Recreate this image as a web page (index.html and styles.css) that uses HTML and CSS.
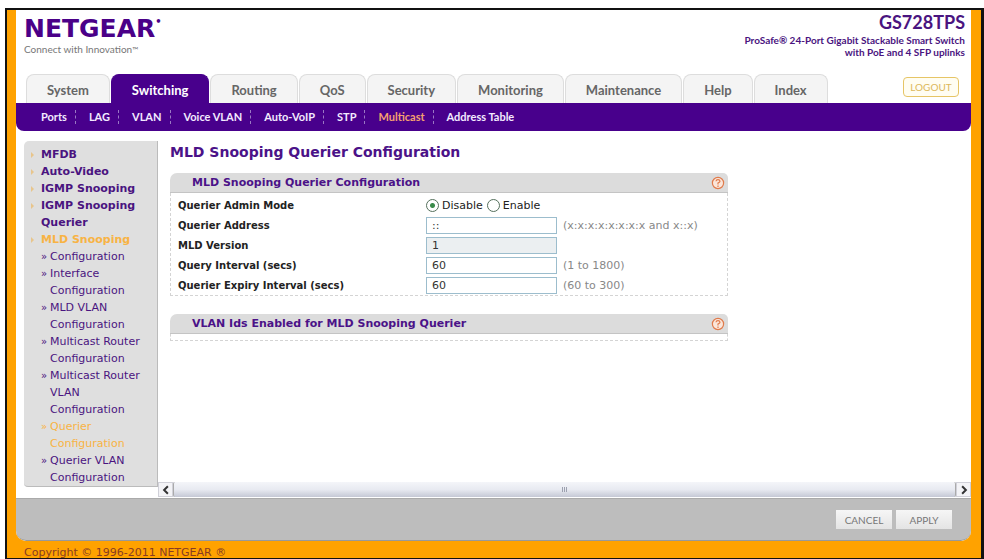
FILE: index.html
```html
<!DOCTYPE html>
<html lang="en">
<head>
<meta charset="utf-8">
<title>NETGEAR GS728TPS</title>
<link rel="stylesheet" href="styles.css">
</head>
<body>
<div class="frame">
  <div class="app">
    <header class="header">
      <div class="brand">
        <div class="wordmark">NETGEAR<span class="dot">•</span></div>
        <div class="tagline">Connect with Innovation<span class="tm">™</span></div>
      </div>
      <div class="model">
        <div class="model-name">GS728TPS</div>
        <div class="model-text">ProSafe® 24-Port Gigabit Stackable Smart Switch<br>with PoE and 4 SFP uplinks</div>
      </div>
    </header>
    <div class="tabbar">
      <nav class="tabs">
        <a class="tab" href="#">System</a>
        <a class="tab active" href="#">Switching</a>
        <a class="tab" href="#">Routing</a>
        <a class="tab" href="#">QoS</a>
        <a class="tab" href="#">Security</a>
        <a class="tab" href="#">Monitoring</a>
        <a class="tab" href="#">Maintenance</a>
        <a class="tab" href="#">Help</a>
        <a class="tab" href="#">Index</a>
      </nav>
      <button class="logout" type="button">LOGOUT</button>
    </div>
    <nav class="subnav">
      <a href="#">Ports</a>
      <a href="#">LAG</a>
      <a href="#">VLAN</a>
      <a href="#">Voice VLAN</a>
      <a href="#">Auto-VoIP</a>
      <a href="#">STP</a>
      <a class="current" href="#">Multicast</a>
      <a href="#">Address Table</a>
    </nav>
    <div class="body">
      <nav class="sidebar">
        <ul class="menu">
          <li><a href="#">MFDB</a></li>
          <li><a href="#">Auto-Video</a></li>
          <li><a href="#">IGMP Snooping</a></li>
          <li><a href="#">IGMP Snooping Querier</a></li>
          <li class="open"><a class="current" href="#">MLD Snooping</a>
            <ul class="submenu">
              <li><a href="#">Configuration</a></li>
              <li><a href="#">Interface Configuration</a></li>
              <li><a href="#">MLD VLAN Configuration</a></li>
              <li><a href="#">Multicast Router Configuration</a></li>
              <li><a href="#">Multicast Router VLAN Configuration</a></li>
              <li class="selected"><a class="current" href="#">Querier Configuration</a></li>
              <li><a href="#">Querier VLAN Configuration</a></li>
            </ul>
          </li>
        </ul>
      </nav>
      <main class="main">
        <div class="content">
          <h1>MLD Snooping Querier Configuration</h1>
          <section class="panel">
            <div class="panel-head">
              <h2>MLD Snooping Querier Configuration</h2>
              <button class="help" type="button" aria-label="Help"><svg viewBox="0 0 14 14"><circle cx="7" cy="7" r="5.6"/><path d="M5 5.2Q5.2 3.6 7 3.6T9 5.2Q9 6.2 7 7V8.6M7 9.6V11"/></svg></button>
            </div>
            <form class="panel-body">
              <div class="row">
                <span class="label" id="mode">Querier Admin Mode</span>
                <div class="radios" role="radiogroup" aria-labelledby="mode">
                  <input type="radio" name="mode" id="disable" checked><label for="disable">Disable</label>
                  <input type="radio" name="mode" id="enable"><label for="enable">Enable</label>
                </div>
              </div>
              <div class="row">
                <label class="label" for="address">Querier Address</label>
                <input class="field" type="text" id="address" value="::">
                <span class="hint">(x:x:x:x:x:x:x:x and x::x)</span>
              </div>
              <div class="row">
                <label class="label" for="version">MLD Version</label>
                <input class="field" type="text" id="version" value="1" readonly>
              </div>
              <div class="row">
                <label class="label" for="interval">Query Interval (secs)</label>
                <input class="field" type="text" id="interval" value="60">
                <span class="hint">(1 to 1800)</span>
              </div>
              <div class="row">
                <label class="label" for="expiry">Querier Expiry Interval (secs)</label>
                <input class="field" type="text" id="expiry" value="60">
                <span class="hint">(60 to 300)</span>
              </div>
            </form>
          </section>
          <section class="panel">
            <div class="panel-head">
              <h2>VLAN Ids Enabled for MLD Snooping Querier</h2>
              <button class="help" type="button" aria-label="Help"><svg viewBox="0 0 14 14"><circle cx="7" cy="7" r="5.6"/><path d="M5 5.2Q5.2 3.6 7 3.6T9 5.2Q9 6.2 7 7V8.6M7 9.6V11"/></svg></button>
            </div>
            <div class="panel-body empty"></div>
          </section>
        </div>
        <div class="scroll">
          <button class="arrow" type="button" aria-label="Scroll left"><svg viewBox="0 0 8 8"><path d="M5.5 1L2.5 4L5.5 7"/></svg></button>
          <div class="thumb"><span class="grip"></span></div>
          <button class="arrow" type="button" aria-label="Scroll right"><svg viewBox="0 0 8 8"><path d="M2.5 1L5.5 4L2.5 7"/></svg></button>
        </div>
      </main>
    </div>
    <footer class="actions">
      <button type="button">CANCEL</button>
      <button type="button">APPLY</button>
    </footer>
  </div>
  <div class="copyright">Copyright © 1996-2011 NETGEAR ®</div>
</div>
</body>
</html>
```
FILE: styles.css
```css
* { box-sizing: border-box; }
body {
  margin: 0;
  padding: 8px 0 0 5px;
  min-height: 100vh;
  display: flex;
  background: #fff;
  font: 11px/17px "DejaVu Sans", sans-serif;
  color: #222;
}
a { color: inherit; text-decoration: none; }
ul { list-style: none; margin: 0; padding: 0; }
h1, h2 { margin: 0; }
button { padding: 0; margin: 0; font-family: Lato, sans-serif; }

.frame {
  flex: 1;
  display: flex;
  flex-direction: column;
  padding: 0 10px 0 9px;
  border: 2px solid #111;
  border-right-width: 3px;
  background: #ffa200;
}
.app {
  flex: 1;
  display: flex;
  flex-direction: column;
  background: #fff;
  border-radius: 0 0 10px 10px;
  overflow: hidden;
}
.header {
  height: 64px;
  padding: 0 6px 0 8px;
  display: flex;
  justify-content: space-between;
}
.brand { padding-top: 5px; }
.wordmark {
  display: flex;
  font: bold 25px/28px "DejaVu Sans", sans-serif;
  color: #4a0088;
}
.dot { font-size: 10px; line-height: 14px; }
.tagline { font: 10px/12px Lato, sans-serif; color: #777; }
.tm { font-size: 8px; }
.model { text-align: right; color: #4a1480; }
.model-name { font: bold 18px/24px Lato, sans-serif; }
.model-text { font: bold 10px/12px Lato, sans-serif; }

.tabbar {
  height: 29px;
  padding: 0 12px 0 10px;
  display: flex;
  align-items: flex-end;
  justify-content: space-between;
}
.tabs { display: flex; gap: 1px; }
.tab {
  height: 29px;
  padding: 0 20px;
  border: 1px solid #ddd;
  border-bottom: 0;
  border-radius: 8px 8px 0 0;
  background: #f4f4f4;
  color: #666;
  font: bold 13px/30px Lato, sans-serif;
}
.tab.active { background: #48008c; border-color: #48008c; color: #fff; }
.logout {
  width: 56px;
  height: 20px;
  margin-bottom: 6px;
  border: 1px solid #e6c566;
  border-radius: 4px;
  background: #fffdf2;
  color: #dcb85a;
  font-size: 10px;
}
.subnav {
  height: 28px;
  padding: 0 0 0 25px;
  display: flex;
  align-items: center;
  background: #48008c;
  border-radius: 0 0 8px 8px;
  color: #f3eaff;
  font: bold 11px/14px Lato, sans-serif;
}
.subnav a + a { margin-left: 8px; padding-left: 13px; border-left: 1px dashed #9a78c4; }
.subnav .current { color: #f5a070; }

.body {
  flex: 1;
  display: grid;
  grid-template-columns: 134px 1fr;
  padding-left: 8px;
}
.sidebar {
  margin: 10px 0 11px;
  padding: 5px 0 0 17px;
  background: #dfdfdf;
  border-right: 1px solid #bbb;
  border-bottom: 1px solid #bbb;
  border-radius: 5px 0 0 4px;
  color: #4a1480;
}
.menu > li { position: relative; }
.menu > li > a { font-weight: bold; }
.menu > li::before {
  content: "";
  position: absolute;
  left: -10px;
  top: 6px;
  border: 3px solid transparent;
  border-left-color: #e8c58c;
}
.menu .current { color: #f8b344; }
.submenu { padding-left: 9px; }
.submenu li { position: relative; }
.submenu li::before {
  content: "»";
  position: absolute;
  left: -9px;
  font-size: 10px;
}
.submenu .selected::before { color: #f8b344; }

.main { display: flex; flex-direction: column; min-width: 0; }
.content { flex: 1; padding: 12px 12px 0; }
h1 { font-size: 14px; line-height: 18px; margin-bottom: 12px; color: #4b1288; }
.panel { max-width: 558px; margin-bottom: 18px; }
.panel-head {
  height: 20px;
  padding: 0 3px 0 22px;
  display: flex;
  align-items: center;
  justify-content: space-between;
  background: #dcdcdc;
  border-bottom: 1px solid #c4c4c4;
  border-radius: 7px 5px 0 0;
}
h2 { font-size: 11px; line-height: 18px; color: #4b1288; }
.help { width: 14px; height: 14px; border: 0; background: none; }
.help svg { display: block; fill: #fbe6da; stroke: #e07b4c; stroke-width: 1.2; }
.panel-body {
  padding: 2px 0 0 7px;
  border: 1px dashed #d4d4d4;
  border-top: 0;
}
.empty { height: 7px; }
.row { height: 20px; display: flex; align-items: center; }
.label { width: 248px; font-size: 10px; font-weight: bold; }
.radios { display: flex; align-items: center; }
.radios input {
  appearance: none;
  width: 13px;
  height: 13px;
  margin: 0 3px 0 0;
  border: 1px solid #55705c;
  border-radius: 50%;
  background: #fff;
}
.radios input:checked { background: radial-gradient(circle, #3a8a4a 2px, #fff 3px); }
.radios label { margin-right: 4px; }
.field {
  width: 131px;
  height: 17px;
  margin-right: 6px;
  padding: 0 5px;
  border: 1px solid #9cbdcd;
  background: #fff;
  color: #333;
  font: 11px/15px "DejaVu Sans", sans-serif;
}
.field:read-only { background: #ebeff1; }
.hint { color: #888; }

.scroll { height: 15px; margin-bottom: 1px; display: flex; background: #e9ebf1; }
.arrow { width: 15px; border: 1px solid #d0d0d8; background: #f3f3f6; }
.arrow svg { display: block; width: 10px; margin: auto; fill: none; stroke: #333; stroke-width: 1.6; }
.thumb {
  flex: 1;
  display: flex;
  align-items: center;
  justify-content: center;
  border: solid #aaa;
  border-width: 0 1px;
  border-radius: 2px;
  background: linear-gradient(#f4f5f9, #e8eaf1 50%, #c5c8d5);
}
.grip { width: 6px; height: 5px; background: repeating-linear-gradient(90deg, #9da1b0 0 1px, transparent 1px 2px); }

.actions {
  height: 43px;
  padding: 0 19px 0 0;
  display: flex;
  align-items: center;
  justify-content: flex-end;
  gap: 4px;
  background: #bdbdbd;
  border-top: 1px solid #aaa;
  border-bottom: 1px solid #999;
  border-radius: 0 0 10px 10px;
}
.actions button {
  width: 56px;
  height: 19px;
  border: 0;
  background: linear-gradient(#f6f6f6, #e4e4e4);
  color: #777;
  font-size: 10px;
}
.copyright { height: 17px; padding: 3px 0 0 8px; line-height: 17px; color: #8a3c22; }
```
